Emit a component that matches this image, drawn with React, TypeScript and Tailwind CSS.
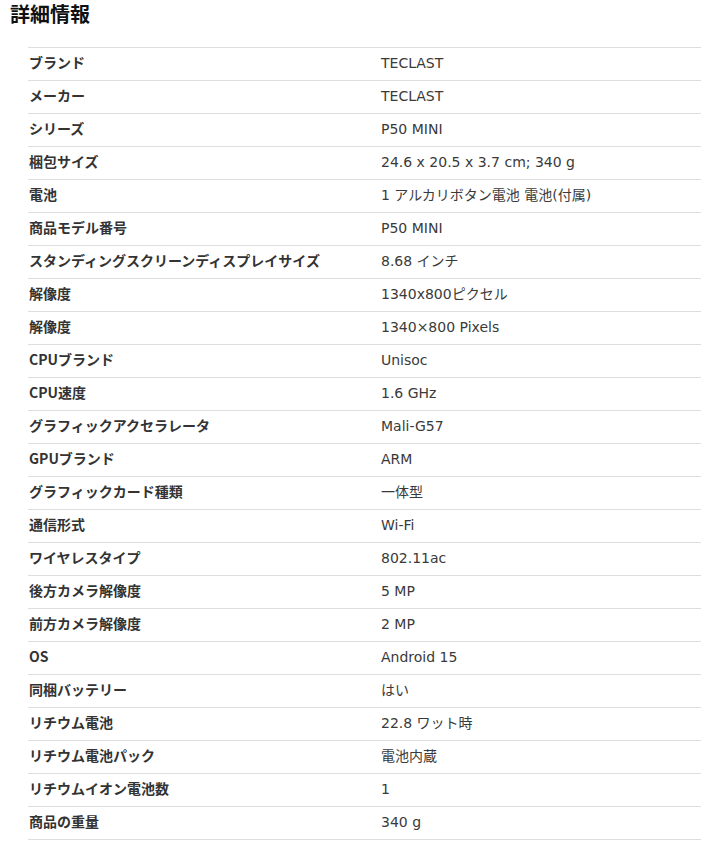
import React from "react";

const rows: [string, string][] = [
  ["ブランド", "TECLAST"],
  ["メーカー", "TECLAST"],
  ["シリーズ", "P50 MINI"],
  ["梱包サイズ", "24.6 x 20.5 x 3.7 cm; 340 g"],
  ["電池", "1 アルカリボタン電池 電池(付属)"],
  ["商品モデル番号", "P50 MINI"],
  ["スタンディングスクリーンディスプレイサイズ", "8.68 インチ"],
  ["解像度", "1340x800ピクセル"],
  ["解像度", "1340×800 Pixels"],
  ["CPUブランド", "Unisoc"],
  ["CPU速度", "1.6 GHz"],
  ["グラフィックアクセラレータ", "Mali-G57"],
  ["GPUブランド", "ARM"],
  ["グラフィックカード種類", "一体型"],
  ["通信形式", "Wi-Fi"],
  ["ワイヤレスタイプ", "802.11ac"],
  ["後方カメラ解像度", "5 MP"],
  ["前方カメラ解像度", "2 MP"],
  ["OS", "Android 15"],
  ["同梱バッテリー", "はい"],
  ["リチウム電池", "22.8 ワット時"],
  ["リチウム電池パック", "電池内蔵"],
  ["リチウムイオン電池数", "1"],
  ["商品の重量", "340 g"],
];

export default function App() {
  return (
    <div
      className="bg-white w-[701px] text-[#333]"
      style={{ fontFamily: '"Noto Sans CJK JP", "Noto Sans", sans-serif' }}
    >
      <h2 className="pl-[10px] pt-[1px] h-[47px] text-[20px] leading-[26px] font-bold text-[#111]">
        詳細情報
      </h2>
      <div className="ml-[28px] border-t border-[#dddddd]">
        {rows.map(([k, v], i) => (
          <div
            key={i}
            className="grid grid-cols-[353px_1fr] h-[33px] items-center pb-[2px] border-b border-[#dddddd] text-[14px]"
          >
            <div className="pl-[1px] mb-[2px] font-bold text-[#333]">{k}</div>
            <div className="font-['DejaVu_Sans','Noto_Sans_CJK_JP',sans-serif] text-[#3a3a3a]">
              {v}
            </div>
          </div>
        ))}
      </div>
    </div>
  );
}
